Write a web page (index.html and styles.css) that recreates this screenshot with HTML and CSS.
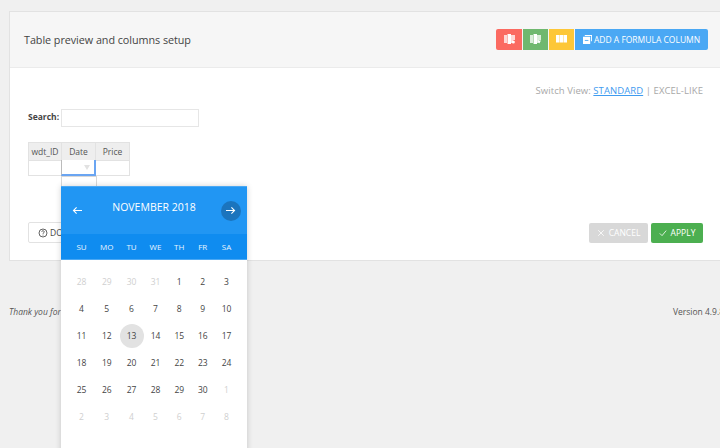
FILE: index.html
```html
<!DOCTYPE html>
<html lang="en">
<head>
<meta charset="utf-8">
<title>Table preview</title>
<link rel="stylesheet" href="styles.css">
</head>
<body>
<section class="panel">
  <header class="panel-head">
    <h2 class="panel-title">Table preview and columns setup</h2>
    <div class="tools">
      <button class="tool tool-red"><svg class="ic" viewBox="0 0 11 10"><path class="ic-soft" d="M0 1h3v8H0zM7 1h4v5H9v3H7z"/><path d="M3.500 0H7v10H3.500z"/><circle cx="9.300" cy="8" r="1.600"/></svg></button>
      <button class="tool tool-green"><svg class="ic" viewBox="0 0 11 10"><path class="ic-soft" d="M0 1h3v8H0zM7 1h4v5H9v3H7z"/><path d="M3.500 0H7v10H3.500z"/><path d="M7.500 6.500h3.500L9.300 9.500z"/></svg></button>
      <button class="tool tool-yellow"><svg class="ic" viewBox="0 0 11 10"><path d="M0 1h3.400v7.500H0zM3.800 1h3.400v7.500H3.800zM7.600 1H11v7.500H7.600z"/></svg></button>
      <button class="tool tool-blue"><svg class="ic ic-sm" viewBox="0 0 10 10"><path d="M2 0h8v7H9V1H2zM0 2h8v8H0z"/><path class="ic-cut" d="M2 5.500h4v1H2z"/></svg>ADD A FORMULA COLUMN</button>
    </div>
  </header>
  <div class="panel-body">
    <p class="switch">Switch View: <a class="switch-link" href="#">STANDARD</a> | EXCEL-LIKE</p>
    <label class="search">Search:<input class="search-input" type="text"></label>
    <div class="table-wrap">
      <table class="grid">
        <thead><tr><th class="c1">wdt_ID</th><th class="c2">Date</th><th class="c3">Price</th></tr></thead>
        <tbody><tr><td></td><td></td><td></td></tr></tbody>
      </table>
      <div class="cell-edit"><span class="caret"></span></div>
      <div class="cell-drop"></div>
    </div>
    <div class="actions">
      <button class="doc"><svg class="doc-ic" viewBox="0 0 12 12"><circle cx="6" cy="6" r="4.800"/><path d="M4.500 4.800c0-2 3-2 3-.2 0 1.200-1.500 1.200-1.500 2.400M6 8v1"/></svg>DOCS</button>
      <div class="act-right">
        <button class="btn btn-cancel"><svg class="b-ic" viewBox="0 0 10 10"><path d="M1.500 1.500l7 7M8.500 1.500l-7 7"/></svg>CANCEL</button>
        <button class="btn btn-apply"><svg class="b-ic" viewBox="0 0 10 10"><path d="M1 5.500l2.800 2.800L9 2"/></svg>APPLY</button>
      </div>
    </div>
  </div>
</section>
<footer class="foot">
  <em>Thank you for</em>
  <span>Version 4.9.8</span>
</footer>

<div class="cal">
  <div class="cal-head">
    <svg class="arrow" viewBox="0 0 12 10"><path d="M11 5H1.500M5 1.500L1.500 5 5 8.500"/></svg>
    <span class="cal-title">NOVEMBER 2018</span>
    <span class="next"><svg class="arrow" viewBox="0 0 12 10"><path d="M1 5h9.500M7 1.500L10.500 5 7 8.500"/></svg></span>
  </div>
  <div class="cal-week"><span>SU</span><span>MO</span><span>TU</span><span>WE</span><span>TH</span><span>FR</span><span>SA</span></div>
  <div class="cal-days">
    <span class="off">28</span><span class="off">29</span><span class="off">30</span><span class="off">31</span><span>1</span><span>2</span><span>3</span>
    <span>4</span><span>5</span><span>6</span><span>7</span><span>8</span><span>9</span><span>10</span>
    <span>11</span><span>12</span><span class="today">13</span><span>14</span><span>15</span><span>16</span><span>17</span>
    <span>18</span><span>19</span><span>20</span><span>21</span><span>22</span><span>23</span><span>24</span>
    <span>25</span><span>26</span><span>27</span><span>28</span><span>29</span><span>30</span><span class="off">1</span>
    <span class="off">2</span><span class="off">3</span><span class="off">4</span><span class="off">5</span><span class="off">6</span><span class="off">7</span><span class="off">8</span>
  </div>
</div>
</body>
</html>
```
FILE: styles.css
```css
* { box-sizing: border-box; }
html, body { height: 448px; overflow: hidden; }
body {
  margin: 0;
  padding: 11px 0 0 9px;
  width: 720px;
  background: #f0f0f0;
  font-family: "Open Sans", "Noto Sans", sans-serif;
  color: #444;
  position: relative;
}
button { font-family: inherit; border: 0; padding: 0; margin: 0; }

.panel {
  height: 250px;
  background: #fff;
  border: 1px solid #e2e2e2;
  border-right: 0;
  display: flex;
  flex-direction: column;
}
.panel-head {
  height: 56px;
  background: #f6f6f6;
  border-bottom: 1px solid #ebebeb;
  display: flex;
  align-items: center;
  justify-content: space-between;
  padding: 0 12px 1px 14px;
}
.panel-title { margin: 0; font-size: 10.800px; font-weight: 400; color: #444; letter-spacing: -.05px; }
.tools { display: flex; gap: 1px; }
.tool {
  height: 21px;
  width: 25px;
  color: #fff;
  display: flex;
  align-items: center;
  justify-content: center;
  font-size: 8.500px;
}
.tool-red { background: #fb6a61; border-radius: 2px 0 0 2px; width: 26px; }
.tool-green { background: #6fb86f; }
.tool-yellow { background: #fdc738; }
.tool-blue { background: #4aa8f4; width: 133px; border-radius: 0 2px 2px 0; }
.ic { width: 11px; height: 10px; fill: #fff; }
.ic-soft { opacity: .75; }
.ic-sm { width: 9px; height: 9px; margin-right: 2px; }
.ic-cut { fill: #4aa8f4; }

.panel-body { flex: 1; display: flex; flex-direction: column; padding: 16px 17px 17px 18px; }
.switch { margin: 0; text-align: right; font-size: 9.500px; line-height: 13px; color: #a8a8a8; letter-spacing: .07px; }
.switch-link { color: #3f9cf0; }
.search { margin-top: 12px; display: flex; align-items: flex-start; gap: 2px; font-size: 8.500px; line-height: 15px; font-weight: 700; color: #444; }
.search-input { width: 138px; height: 18px; border: 1px solid #e6e6e6; background: #fff; padding: 0; }

.table-wrap { position: relative; margin-top: 15px; height: 34px; }
.grid { border-collapse: collapse; table-layout: fixed; width: 101px; font-size: 8.500px; }
.grid th, .grid td { border: 1px solid #e2e2e2; padding: 0; text-align: center; font-weight: 400; color: #555; }
.grid th { background: #eee; height: 18px; }
.grid td { background: #fff; height: 15px; }
.c1 { width: 33px; } .c2 { width: 34px; } .c3 { width: 34px; }
.cell-edit {
  position: absolute; left: 33px; top: 18px; width: 35px; height: 16px;
  border-left: 1px solid #bbb; border-right: 2px solid #6aa5f2; border-bottom: 2px solid #6aa5f2;
  background: #fff;
}
.caret {
  position: absolute; right: 4px; top: 5px; width: 0; height: 0;
  border-left: 3px solid transparent; border-right: 3px solid transparent; border-top: 5px solid #e2e2e2;
}
.cell-drop { position: absolute; left: 33px; top: 34px; width: 36px; height: 12px; background: #fff; border: 1px solid #d8d8d8; }

.actions { margin-top: auto; display: flex; align-items: center; justify-content: space-between; }
.doc {
  height: 21px; padding: 0 9px; background: #fff; border: 1px solid #e2e2e2; border-radius: 2px;
  font-size: 8.500px; color: #444; display: flex; align-items: center; gap: 2px;
}
.doc-ic { width: 10px; height: 10px; fill: none; stroke: #444; stroke-width: 1; }
.act-right { display: flex; gap: 3px; }
.btn { height: 20px; display: flex; align-items: center; justify-content: center; gap: 4px; font-size: 8.500px; color: #fff; border-radius: 2px; }
.btn-cancel { width: 59px; background: #d8d8d8; }
.btn-apply { width: 52px; background: #4caf50; }
.b-ic { width: 8px; height: 8px; fill: none; stroke: #fff; stroke-width: 1; }

.foot {
  margin-top: 45px; width: 715px; display: flex; justify-content: space-between;
  font-size: 8.500px; line-height: 12px; color: #555; white-space: nowrap;
}

.cal {
  position: absolute; left: 61px; top: 186px; width: 186px; height: 280px;
  background: #fff; box-shadow: 0 0 6px rgba(0, 0, 0, .18);
}
.cal-head {
  height: 48px; background: #2196f3; color: #fff; display: flex; align-items: center; justify-content: space-between;
  padding: 0 6px 0 11px; border-top: 1px solid #4aa8f4;
}
.cal-title { font-size: 10.500px; margin: 0 0 8px 4px; white-space: nowrap; }
.arrow { width: 11px; height: 9px; fill: none; stroke: #fff; stroke-width: 1.200; flex: none; }
.next { width: 20px; height: 20px; border-radius: 50%; background: #1b74bd; display: flex; align-items: center; justify-content: center; }
.cal-week {
  height: 26px; background: #0f8cf0; border-bottom: 1px solid #4aa8f4;
  display: grid; grid-template-columns: 25px 25.500px 24px 24px 23.500px 23.500px 24px; padding: 0 8px; align-items: center; text-align: center;
  font-size: 8px; color: #e8f4fe;
}
.cal-days {
  display: grid; grid-template-columns: 25px 25.500px 24px 24px 23.500px 23.500px 24px; grid-auto-rows: 27px;
  padding: 8px 8px 0; font-size: 8.500px; color: #444; text-align: center;
}
.cal-days span { display: flex; align-items: center; justify-content: center; }
.cal-days .off { color: #cfcfcf; }
.cal-days .today { background: #e2e2e2; border-radius: 50%; width: 24px; height: 24px; align-self: center; justify-self: center; }
```
